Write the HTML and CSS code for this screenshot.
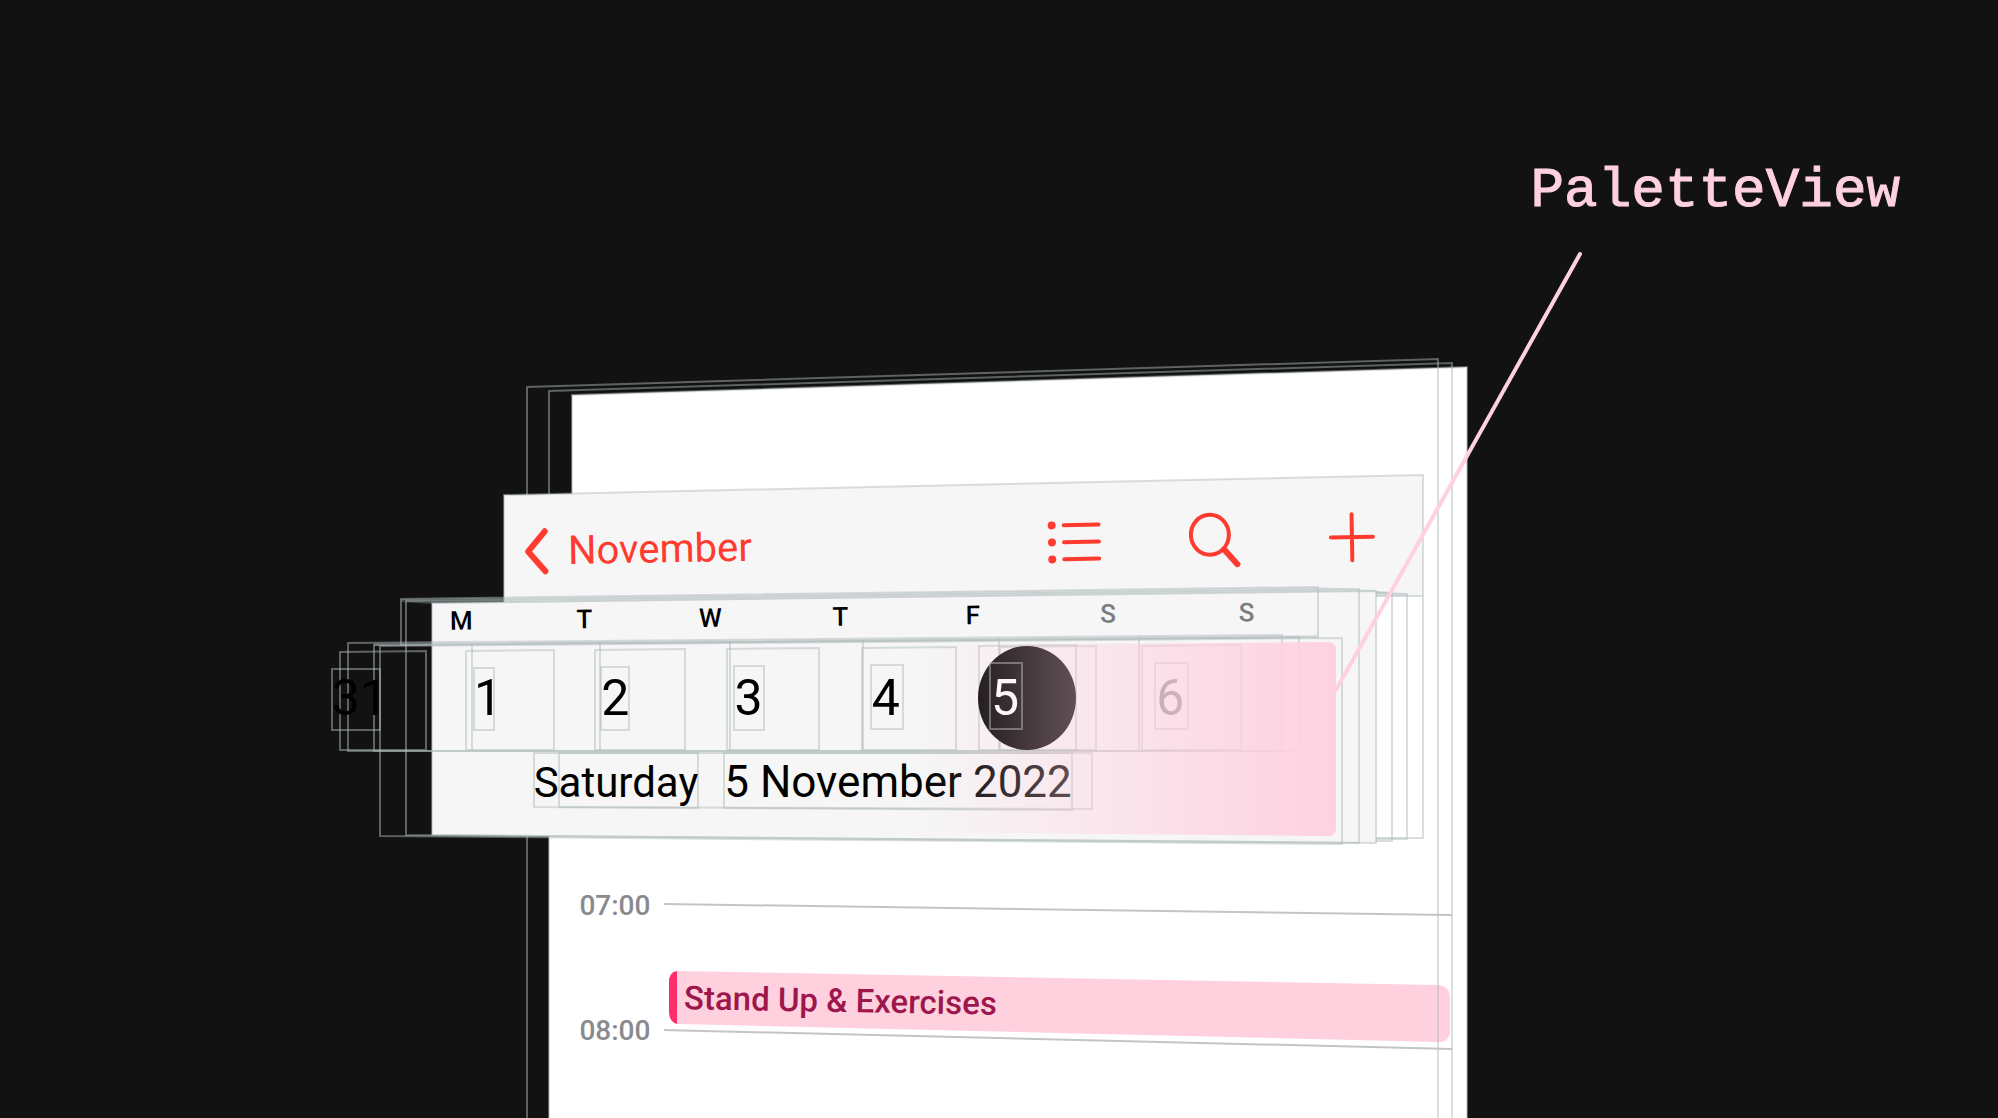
FILE: index.html
```
<!DOCTYPE html>
<html lang="en">
<head>
    <meta charset="UTF-8">
    <meta name="viewport" content="width=device-width, initial-scale=1.0">
    <title>PaletteView</title>
    <link rel="stylesheet" href="styles.css">
</head>
<body>
    <main class="scene">
        <!-- Exploded view layers -->
        <svg class="drawing" viewBox="0 0 1998 1118" aria-hidden="true">
            <!-- Screen -->
            <path fill="#fff" d="M572 395 L1467 367 V1118 H549 V836 H572 Z"/>
            <g class="frame">
                <path d="M527 1118 V387 L1438 359 V1118"/>
                <path d="M549 1118 V391 L1452 363 V1118"/>
                <path d="M572 600 V395 L1467 367 V1118"/>
            </g>

            <!-- Navigation bar -->
            <path fill="#f6f6f6" d="M504 495 L1423 475 V596 L504 603 Z"/>
            <g class="frame">
                <path d="M504 603 V495 L1423 475 V838 H1375"/>
                <path d="M1375 593 L1407 594 V839 H1375"/>
                <path d="M1375 592 L1392 593 V841 H1375"/>
                <path d="M1375 596 H1423"/>
            </g>

            <!-- Palette -->
            <path fill="#f6f6f6" d="M432 603 L1376 591 V843 L432 835 Z"/>
            <path class="band" d="M401 599 L1318 587 L1376 590 L1376 592 L1318 592 L432 604 L401 602 Z"/>
            <path class="band" d="M1376 591 L1392 593 L1407 594 V596 H1376 Z"/>
            <path class="band" d="M374 643 L1318 635 V638 L374 646 Z"/>
            <g class="frame">
                <path d="M432 603 L1376 591 V843 L432 835 Z"/>
                <path d="M406 601 L1359 589 V843 L406 835 Z"/>
                <path d="M380 646 L1342 638 V844 L380 836 Z"/>
                <path d="M401 599 L1318 587 V637 L401 645 Z"/>
                <path d="M348 643 L1282 635 V751 H348 Z"/>
                <path d="M374 645 L1299 637 V751 H374 Z"/>
                <path d="M472 643 V750 M600 642 V750 M730 641 V750 M863 640 V750 M999 638 V750 M1139 637 V750"/>
            </g>

            <!-- Day cells -->
            <g class="frame">
                <path d="M340 652 L426 651 V750 H340 Z"/>
                <path d="M466 651 L554 650 V750 H466 Z"/>
                <path d="M595 650 L685 649 V750 H595 Z"/>
                <path d="M727 649 L819 648 V750 H727 Z"/>
                <path d="M862 648 L956 647 V750 H862 Z"/>
                <path d="M979 646 L1076 645 V750 H979 Z"/>
                <path d="M1000 647 L1096 646 V750 H1000 Z"/>
                <path d="M1142 646 L1241 645 V750 H1142 Z"/>
            </g>
            <ellipse cx="1027" cy="698" rx="49" ry="52"/>
            <g class="frame">
                <path d="M332 669 H380 V730 H332 Z"/>
                <path d="M474 668 H494 V730 H474 Z"/>
                <path d="M601 667 H629 V730 H601 Z"/>
                <path d="M734 666 H764 V730 H734 Z"/>
                <path d="M871 665 H903 V729 H871 Z"/>
                <path d="M990 663 H1022 V729 H990 Z"/>
                <path d="M1155 663 H1188 V729 H1155 Z"/>
                <path d="M534 753 H698 V808 L534 807 Z"/>
                <path d="M724 753 H1072 V810 L724 808 Z"/>
                <path d="M559 753 H1092 V809 L559 807 Z"/>
            </g>

            <!-- Hours -->
            <path class="hour" d="M664 904 L1452 915 M664 1030 L1452 1049"/>
            <path fill="#ffd1df" d="M677 971 L1438 985 Q1450 986 1450 998 V1030 Q1450 1043 1438 1042 L677 1024 Z"/>
            <path fill="#ff2d68" d="M677 971 V1024 Q669 1022 669 1011 V982 Q669 972 677 971 Z"/>
            <path class="frame" d="M1438 985 V1042"/>
        </svg>

        <nav class="navbar">
            <button class="back" type="button">
                <svg width="26" height="48" viewBox="0 0 26 48" aria-hidden="true">
                    <path stroke-width="6" d="M22 4 L5 24 L22 44"/>
                </svg>
                November
            </button>
            <div class="actions">
                <button type="button" aria-label="List">
                    <svg width="54" height="48" viewBox="0 0 54 48">
                        <path d="M17 7 H52 M17 24 H52 M17 41 H52"/>
                        <g class="dots">
                            <circle cx="5" cy="7" r="4"/>
                            <circle cx="5" cy="24" r="4"/>
                            <circle cx="5" cy="41" r="4"/>
                        </g>
                    </svg>
                </button>
                <button type="button" aria-label="Search">
                    <svg width="52" height="56" viewBox="0 0 52 56">
                        <ellipse cx="21" cy="23" rx="19" ry="20"/>
                        <path stroke-width="6" d="M35 38 L48 53"/>
                    </svg>
                </button>
                <button type="button" aria-label="Add">
                    <svg width="46" height="54" viewBox="0 0 46 54">
                        <path d="M2 27 H44 M23 4 V50"/>
                    </svg>
                </button>
            </div>
        </nav>

        <section class="palette">
            <div class="weekdays">
                <span>M</span>
                <span>T</span>
                <span>W</span>
                <span>T</span>
                <span>F</span>
                <span class="weekend">S</span>
                <span class="weekend">S</span>
            </div>
            <div class="days">
                <button type="button">31</button>
                <button type="button">1</button>
                <button type="button">2</button>
                <button type="button">3</button>
                <button type="button">4</button>
                <button type="button" class="selected">5</button>
                <button type="button" class="weekend">6</button>
            </div>
            <p class="date">
                <span>Saturday</span>
                <span class="full">5 November 2022</span>
            </p>
        </section>

        <section class="timeline">
            <time>07:00</time>
            <time>08:00</time>
            <a class="event" href="#">Stand Up &amp; Exercises</a>
        </section>

        <!-- Highlight and leader line -->
        <svg class="drawing highlight" viewBox="0 0 1998 1118" aria-hidden="true">
            <defs>
                <linearGradient id="pink" gradientUnits="userSpaceOnUse" x1="915" y1="0" x2="1336" y2="0">
                    <stop offset="0" stop-color="#ffd1df" stop-opacity="0"/>
                    <stop offset="1" stop-color="#ffd1df"/>
                </linearGradient>
            </defs>
            <path fill="url(#pink)" d="M890 646 L1328 642 Q1336 642 1336 650 V828 Q1336 836 1328 836 L890 832 Z"/>
            <path class="leader" d="M1580 254 L1336 690"/>
        </svg>

        <h1 class="callout">PaletteView</h1>
    </main>
</body>
</html>
```
FILE: styles.css
```
body {
    margin: 0;
    background-color: #121212;
    font-family: Roboto, "Liberation Sans", sans-serif;
}
.scene {
    position: relative;
    width: 100%;
    aspect-ratio: 1998 / 1118;
    overflow: hidden;
}
.drawing {
    display: block;
    width: 100%;
}
.highlight {
    position: absolute;
    top: 0;
    left: 0;
    pointer-events: none;
}
.frame {
    fill: none;
    stroke: rgba(176, 186, 188, 0.48);
    stroke-width: 2;
}
.band {
    fill: rgba(176, 186, 188, 0.3);
}
.hour {
    stroke: #c4c4c6;
    stroke-width: 2;
}
.leader {
    stroke: #ffd1df;
    stroke-width: 4;
    stroke-linecap: round;
}
button {
    padding: 0;
    border: none;
    background: none;
    font-family: inherit;
    cursor: pointer;
}

/* Navigation bar */
.navbar {
    position: absolute;
    top: 43.8%;
    left: 25.2%;
    width: 46%;
    height: 9.6%;
    box-sizing: border-box;
    padding: 0 47px 0 20px;
    display: flex;
    align-items: center;
    justify-content: space-between;
    transform: rotate(-1deg);
}
.navbar button {
    display: flex;
    align-items: center;
    color: #ff3b30;
}
.navbar svg {
    fill: none;
    stroke: currentColor;
    stroke-width: 4;
    stroke-linecap: round;
    stroke-linejoin: round;
}
.navbar .dots {
    fill: currentColor;
    stroke: none;
}
.back {
    gap: 19px;
    font-size: 40px;
}
.actions {
    display: flex;
    align-items: center;
    gap: 88px;
}

/* Palette */
.palette {
    position: absolute;
    top: 53.5%;
    left: 16.6%;
    width: 50.4%;
}
.weekdays {
    display: grid;
    grid-template-columns: 126fr 122fr 133fr 133fr 134fr 138fr 100fr;
    margin-left: 118px;
    font-size: 26px;
    font-weight: 500;
    line-height: 36px;
    transform: rotate(-0.6deg);
}
.weekdays .weekend {
    color: #7c7c7f;
}
.days {
    display: grid;
    grid-template-columns: 142fr 127fr 133fr 137fr 119fr 165fr 182fr;
    margin-top: 30px;
}
.days button {
    font-size: 50px;
    line-height: 68px;
    text-align: left;
    color: #000;
}
.days .selected {
    color: #fff;
}
.days .weekend {
    color: #808080;
}
.date {
    display: flex;
    align-items: baseline;
    gap: 26px;
    margin: 20px 0 0 202px;
    font-size: 42px;
    line-height: 60px;
}
.date .full {
    font-size: 44px;
}

/* Timeline */
.timeline {
    position: absolute;
    top: 79.4%;
    left: 28.8%;
    width: 43%;
    display: grid;
    grid-template-columns: 75px 1fr;
    gap: 89px 34px;
}
.timeline time {
    grid-column: 1;
    font-size: 28px;
    font-weight: 500;
    line-height: 36px;
    text-align: right;
    color: #8a8a8e;
}
.event {
    grid-column: 2;
    grid-row: 1 / 3;
    place-self: start;
    margin-top: 93px;
    font-size: 33px;
    font-weight: 500;
    line-height: 40px;
    color: #9d174d;
    text-decoration: none;
    transform: rotate(1deg);
}

.callout {
    position: absolute;
    top: 14%;
    left: 76.6%;
    margin: 0;
    font-family: "Liberation Mono", monospace;
    font-size: 56px;
    font-weight: 400;
    line-height: 68px;
    color: #ffd1df;
    -webkit-text-stroke: 1px #ffd1df;
}
```
